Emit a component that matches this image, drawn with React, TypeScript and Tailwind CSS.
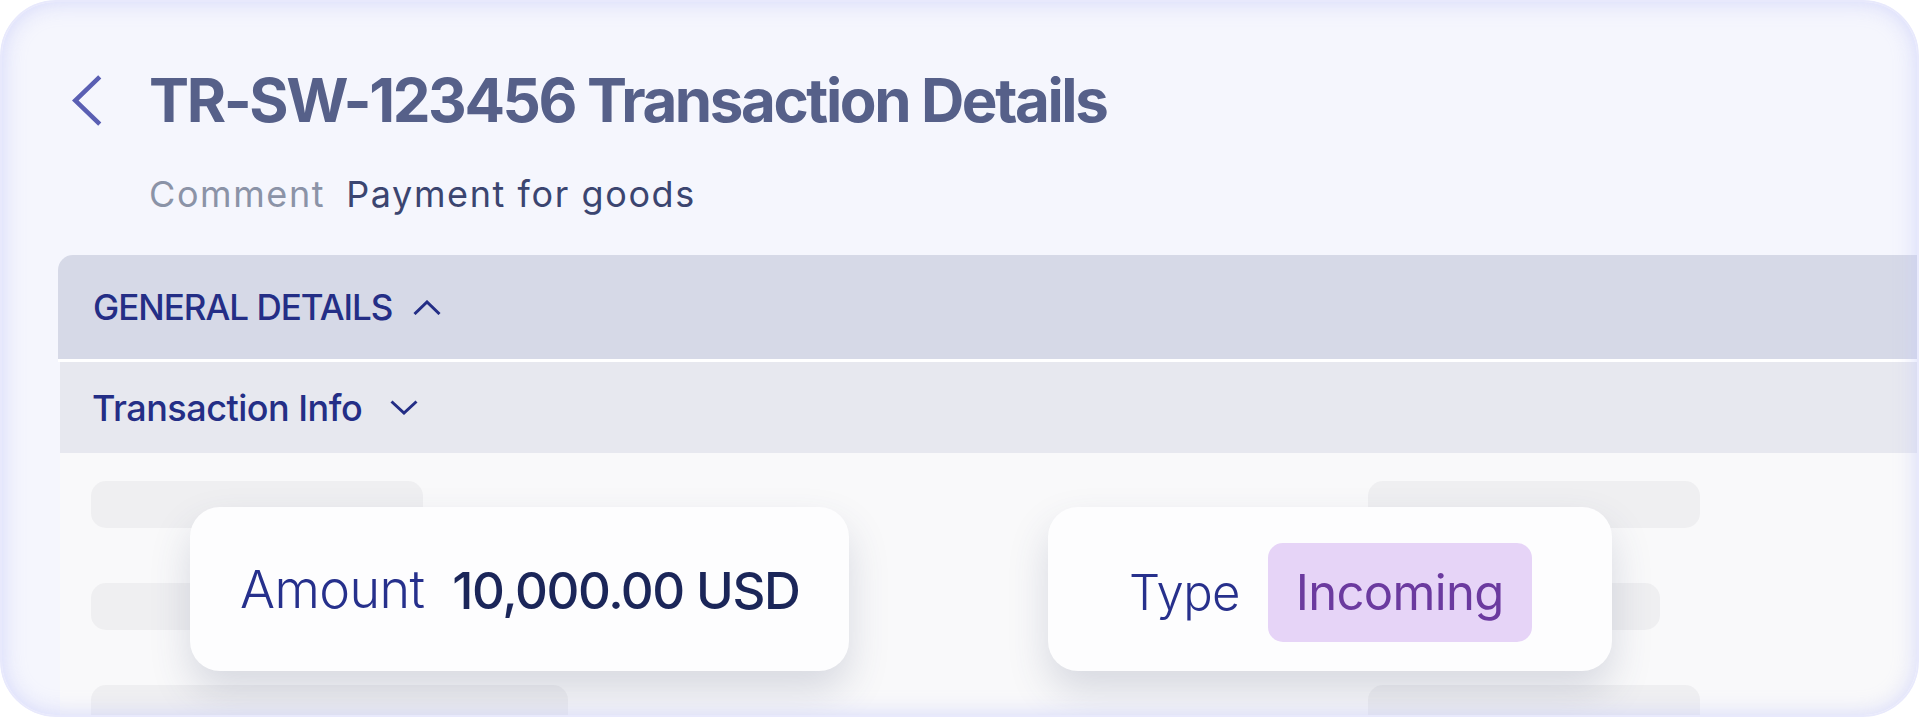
import React from "react";

const font = { fontFamily: "Inter, 'Noto Sans', sans-serif" };

function Chevron({ dir, className }: { dir: "up" | "down" | "left"; className?: string }) {
  if (dir === "left") {
    return (
      <svg viewBox="0 0 30 52" className={className} fill="none" stroke="currentColor" strokeWidth="4.6" strokeLinecap="butt" strokeLinejoin="miter">
        <polyline points="28,2 3,26 28,50" />
      </svg>
    );
  }
  return (
    <svg viewBox="0 0 28 15" className={className} fill="none" stroke="currentColor" strokeWidth="3" strokeLinejoin="miter">
      {dir === "up" ? <polyline points="1.5,14 14,2 26.5,14" /> : <polyline points="1.5,1.5 14,13 26.5,1.5" />}
    </svg>
  );
}

function Bar({ w }: { w: string }) {
  return <div className={`h-[47px] rounded-[15px] bg-[#efeff1] ${w}`} />;
}

export default function App() {
  return (
    <div className="w-[1920px] h-[719px] bg-white overflow-hidden" style={font}>
      <div className="relative h-[717px] w-[1919px] rounded-[56px] bg-[#f5f6fd] overflow-hidden">
        {/* Header */}
        <div className="flex items-center pl-[72px] pt-[62px] h-[138px]">
          <Chevron dir="left" className="w-[30px] h-[51px] text-[#5a5fb3]" />
          <h1 className="ml-[47px] text-[60px] font-bold leading-none tracking-[-2.4px] text-[#566089]">
            TR-SW-123456 Transaction Details
          </h1>
        </div>
        <div className="flex items-center pl-[149px] mt-[38px] text-[36px] leading-none tracking-[1.6px]">
          <span className="text-[#8b93a7]">Comment</span>
          <span className="ml-[21px] text-[#3b4570]">Payment for goods</span>
        </div>

        {/* Panel */}
        <div className="absolute left-[58px] top-[255px] right-0 bottom-0 rounded-tl-[15px] overflow-hidden flex flex-col">
          <div className="h-[104px] bg-[#d6d9e7] flex items-center pl-[35px] shrink-0">
            <span className="text-[35px] font-medium leading-none tracking-[-1px] text-[#242e86]">GENERAL DETAILS</span>
            <Chevron dir="up" className="ml-[21px] w-[28px] h-[15px] text-[#242e86]" />
          </div>
          <div className="h-[3px] bg-white shrink-0" />
          <div className="h-[91px] bg-[#e7e8ef] flex items-center pl-[32px] ml-[2px] shrink-0">
            <span className="text-[36px] font-medium leading-none tracking-[-0.5px] text-[#242e86]">Transaction Info</span>
            <Chevron dir="down" className="ml-[28px] w-[28px] h-[15px] text-[#242e86]" />
          </div>
          <div className="flex-1 bg-[#f9f9fa] ml-[2px] pt-[28px] pl-[31px] grid grid-cols-[1277px_1fr]">
            <div className="flex flex-col gap-[55px]">
              <Bar w="w-[332px]" />
              <Bar w="w-[400px]" />
              <Bar w="w-[477px]" />
            </div>
            <div className="flex flex-col gap-[55px]">
              <Bar w="w-[332px]" />
              <Bar w="w-[292px]" />
              <Bar w="w-[332px]" />
            </div>
          </div>
        </div>

        {/* Floating callouts */}
        <div className="absolute left-[190px] top-[507px] h-[164px] rounded-[30px] bg-[#fdfdfe] shadow-[0_20px_40px_rgba(60,70,110,0.18)] flex items-center px-[50px]">
          <span className="mt-[2px] text-[52px] font-light leading-none tracking-[-0.6px] text-[#26308c]">Amount</span>
          <span className="ml-[28px] mt-[2px] text-[51px] font-medium leading-none tracking-[-1.4px] text-[#1b2659]">10,000.00 USD</span>
        </div>
        <div className="absolute left-[1048px] top-[507px] h-[164px] rounded-[30px] bg-[#fdfdfe] shadow-[0_20px_40px_rgba(60,70,110,0.18)] flex items-center pl-[81px] pr-[80px]">
          <span className="mt-[6px] text-[49px] font-light leading-none tracking-[-0.6px] text-[#27308c]">Type</span>
          <span className="ml-[28px] mt-[6px] h-[99px] rounded-[15px] bg-[#e6d4f7] px-[28px] flex items-center text-[49px] leading-none tracking-[-0.7px] text-[#6b3a9f]">
            Incoming
          </span>
        </div>

        {/* Edge glow overlay */}
        <div className="pointer-events-none absolute inset-0 rounded-[56px] border-2 border-[#e8e9fc] shadow-[inset_0_0_22px_rgba(200,204,250,0.75)]" />
      </div>
    </div>
  );
}
